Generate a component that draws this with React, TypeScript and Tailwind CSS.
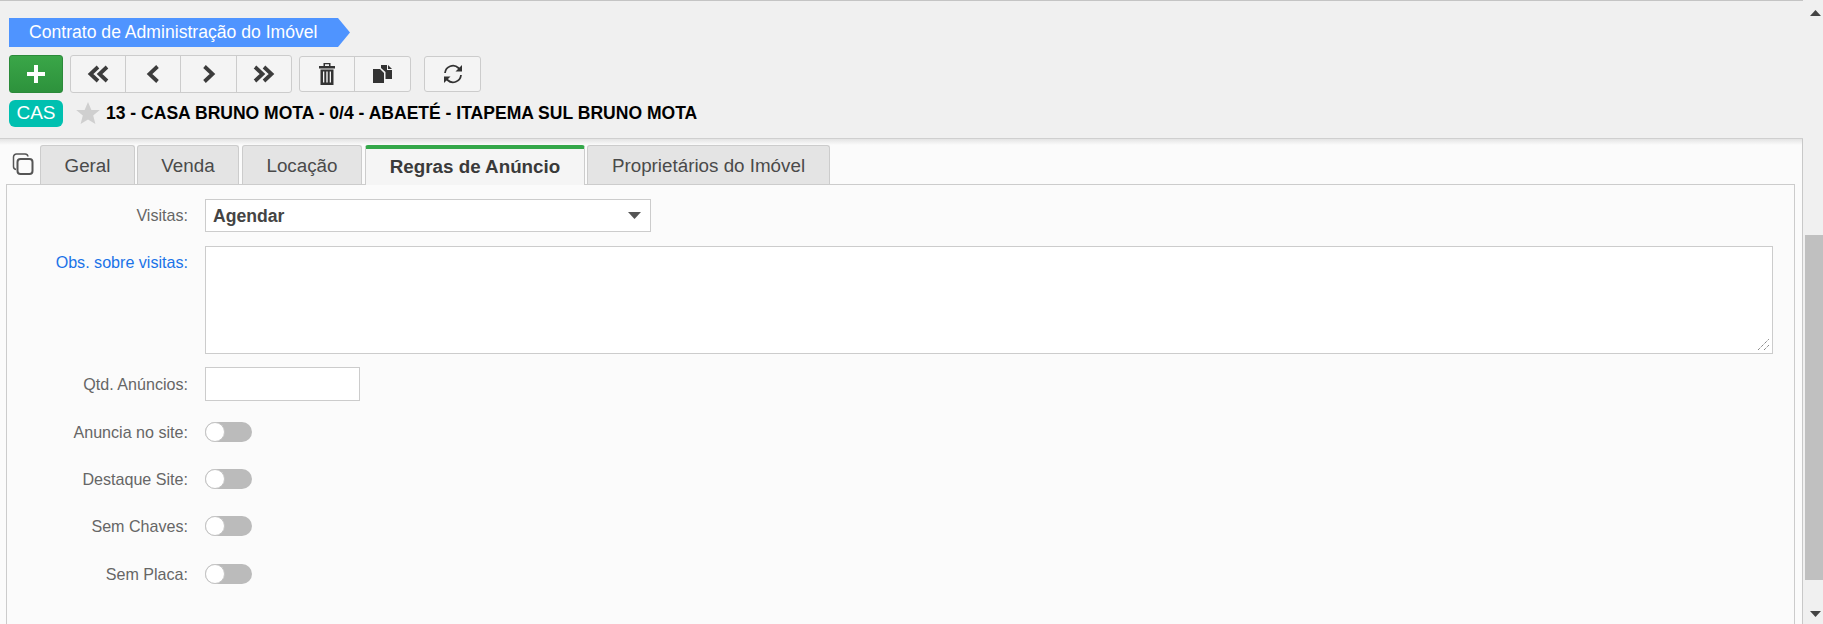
const Btn = ({ w, last, children }: { w: string; last?: boolean; children: React.ReactNode }) => (
  <div className={`${w} ${last ? "" : "border-r border-[#cccccc]"} flex items-center justify-center h-full`}>{children}</div>
);

const Chev = ({ dir, double }: { dir: "l" | "r"; double?: boolean }) => (
  <svg width="22" height="18" viewBox="0 0 22 18" fill="none" stroke="#3c3c3c" strokeWidth="3.8">
    {dir === "l" ? (
      double ? (
        <>
          <path d="M11 2 L3.500 9 L11 16" />
          <path d="M20 2 L12.500 9 L20 16" />
        </>
      ) : (
        <path d="M15.500 1.500 L7.500 9 L15.500 16.500" />
      )
    ) : double ? (
      <>
        <path d="M2 2 L9.500 9 L2 16" />
        <path d="M11 2 L18.500 9 L11 16" />
      </>
    ) : (
      <path d="M6.500 1.500 L14.500 9 L6.500 16.500" />
    )}
  </svg>
);

const Toggle = () => (
  <div className="w-[47px] h-[20px] rounded-full bg-[#bbbbbb] relative">
    <div className="absolute left-0 top-0 w-[20px] h-[20px] rounded-full bg-white border border-[#c4c4c4]" />
  </div>
);

const Row = ({ label, blue, pad, className, children }: { label: string; blue?: boolean; pad?: string; className?: string; children: React.ReactNode }) => (
  <div className={`flex items-start ${className ?? ""}`}>
    <div className={`w-[181px] text-right text-[16.1px] leading-[20px] ${pad ?? ""} ${blue ? "text-[#1a73e8]" : "text-[#666666]"}`}>{label}</div>
    <div className="ml-[17px]">{children}</div>
  </div>
);

const Tab = ({ w, label, active, ml }: { w: string; label: string; active?: boolean; ml?: string }) =>
  active ? (
    <div className={`${w} ${ml ?? ""} h-[40px] mb-[-1px] relative bg-[#f5f5f5] border-x border-[#cccccc] border-t-[4px] border-t-[#34a84a] rounded-t-[3px] flex items-center justify-center text-[18.8px] font-bold text-[#3a3a3a]`}>
      {label}
    </div>
  ) : (
    <div className={`${w} ${ml ?? ""} h-[39px] pt-[2px] bg-[#e4e4e4] border-x border-t border-[#cccccc] rounded-t-[3px] flex items-center justify-center text-[18.8px] text-[#4a4a4a]`}>
      {label}
    </div>
  );

export default function App() {
  return (
    <div className="w-[1823px] h-[624px] overflow-hidden flex bg-[#f0f0f0] font-['Liberation_Sans',Arial,sans-serif]">
      <div className="w-[1803px] flex flex-col">
        <div className="h-[139px] shrink-0 border-t border-[#c4c4c4] border-b border-b-[#cfcfcf] bg-[#f0f0f0] pl-[9px] pt-[17px]">
          <div
            className="w-[341px] h-[29px] bg-[#4f94ff] text-white text-[17.6px] leading-[29px] pl-[20px]"
            style={{ clipPath: "polygon(0 0, 329px 0, 100% 50%, 329px 100%, 0 100%)" }}
          >
            Contrato de Administração do Imóvel
          </div>
          <div className="flex items-center mt-[8px] h-[38px]">
            <div className="w-[54px] h-[38px] rounded-[3px] bg-gradient-to-b from-[#3aa648] to-[#2d923c] border border-[#2b8a3a] flex items-center justify-center">
              <svg width="20" height="20" viewBox="0 0 20 20"><path d="M8 1h4v7h7v4h-7v7H8v-7H1V8h7z" fill="#fff" /></svg>
            </div>
            <div className="ml-[7px] w-[222px] h-[38px] flex bg-[#f4f4f4] border border-[#cccccc] rounded-[3px]">
              <Btn w="w-[55px]"><Chev dir="l" double /></Btn>
              <Btn w="w-[55px]"><Chev dir="l" /></Btn>
              <Btn w="w-[56px]"><Chev dir="r" /></Btn>
              <Btn w="w-[54px]" last><Chev dir="r" double /></Btn>
            </div>
            <div className="ml-[7px] w-[112px] h-[36px] flex bg-[#f4f4f4] border border-[#cccccc] rounded-[3px]">
              <Btn w="w-[55px]">
                <svg width="16" height="22" viewBox="0 0 16 22" fill="#333">
                  <path fillRule="evenodd" d="M4.500 0h7v3H16v2.500H0V3h4.500zM6 1.200V3h4V1.200z" />
                  <path fillRule="evenodd" d="M1.500 6.500h13V22h-13zM4 8.500v11h1.300v-11zM7.300 8.500v11h1.400v-11zM10.700 8.500v11H12v-11z" />
                </svg>
              </Btn>
              <Btn w="w-[55px]" last>
                <svg width="20" height="18" viewBox="0 0 20 18" fill="#333">
                  <path d="M0 4h7l4 4v10H0z" />
                  <path d="M8 0h6v5h5v9h-6.500V7L8 3z" />
                  <path d="M15 0l4 4h-4z" />
                </svg>
              </Btn>
            </div>
            <div className="ml-[13px] w-[57px] h-[36px] bg-[#f4f4f4] border border-[#cccccc] rounded-[3px] flex items-center justify-center">
              <svg width="20" height="20" viewBox="0 0 20 20" fill="none" stroke="#333" strokeWidth="1.8">
                <path d="M2 9a8 8 0 0 1 13.500-5L17 5.500" />
                <path d="M18 11a8 8 0 0 1-13.500 5L3 14.500" />
                <path d="M19 1v6.500h-6.500z" fill="#333" stroke="none" />
                <path d="M1 19v-6.500h6.500z" fill="#333" stroke="none" />
              </svg>
            </div>
          </div>
          <div className="flex items-center mt-[7px] h-[27px]">
            <div className="w-[54px] h-[27px] rounded-[6px] bg-[#00c0b0] text-white text-[19px] flex items-center justify-center">CAS</div>
            <svg className="ml-[13px]" width="24" height="23" viewBox="0 0 24 23"><path d="M12 0l3.400 8h8.400l-6.600 5.600L19.400 22 12 17.400 4.600 22l2.200-8.400L.2 8h8.400z" fill="#cfcfcf" /></svg>
            <div className="ml-[6px] text-[17.55px] font-bold text-black">13 - CASA BRUNO MOTA - 0/4 - ABAETÉ - ITAPEMA SUL BRUNO MOTA</div>
          </div>
        </div>
        <div className="flex-1 bg-[#fbfbfb] border-r border-[#c8c8c8] pl-[6px] pr-[7px] flex flex-col min-h-0 relative">
          <div className="absolute left-0 right-0 top-0 h-[6px] bg-gradient-to-b from-[#e4e4e4] to-[#fbfbfb]" />
          <div className="flex items-end h-[45px] shrink-0 relative">
            <svg className="ml-[6px] mr-[6px] mb-[9px]" width="22" height="22" viewBox="0 0 22 22" fill="none" stroke="#555" strokeWidth="1.500">
              <rect x="5.500" y="6" width="15" height="15" rx="3" strokeWidth="2" />
              <path d="M4 16.500A3 3 0 0 1 1.500 13.500V4a3 3 0 0 1 3-3H13a3 3 0 0 1 3 2.500" />
            </svg>
            <div className="flex">
              <Tab w="w-[95px]" label="Geral" />
              <Tab w="w-[102px]" ml="ml-[2px]" label="Venda" />
              <Tab w="w-[120px]" ml="ml-[3px]" label="Locação" />
              <Tab w="w-[220px]" ml="ml-[3px]" label="Regras de Anúncio" active />
              <Tab w="w-[243px]" ml="ml-[2px]" label="Proprietários do Imóvel" />
            </div>
          </div>
          <div className="flex-1 border-x border-t border-[#cccccc] bg-[#fbfbfb] pt-[14px] pr-[19px] min-h-0">
            <Row label="Visitas:" pad="pt-[6px]" className="h-[34px]">
              <div className="w-[446px] h-[33px] bg-white border border-[#cccccc] flex items-center justify-between pl-[7px] pr-[9px] text-[17.6px] font-bold text-[#444444]">
                <span className="pt-[1px]">Agendar</span>
                <svg width="13" height="7" viewBox="0 0 13 7"><path d="M0 0h13L6.500 7z" fill="#555" /></svg>
              </div>
            </Row>
            <Row label="Obs. sobre visitas:" pad="pt-[6px]" blue className="mt-[13px]">
              <div className="w-[1568px] h-[108px] bg-white border border-[#cccccc] relative">
                <svg className="absolute right-[2px] bottom-[2px]" width="13" height="13" viewBox="0 0 13 13" stroke="#555" strokeWidth="1" strokeDasharray="1 1">
                  <path d="M1 12L12 1M7 12l5-5" />
                </svg>
              </div>
            </Row>
            <Row label="Qtd. Anúncios:" pad="pt-[7px]" className="mt-[13px]">
              <div className="w-[155px] h-[34px] bg-white border border-[#cccccc]" />
            </Row>
            {["Anuncia no site:", "Destaque Site:", "Sem Chaves:", "Sem Placa:"].map((l, i) => (
              <Row key={l} label={l} className={i === 0 ? "mt-[21px] h-[20px]" : i === 3 ? "mt-[28px] h-[20px]" : "mt-[27px] h-[20px]"}>
                <Toggle />
              </Row>
            ))}
          </div>
        </div>
      </div>
      <div className="w-[20px] flex flex-col items-end relative">
        <svg className="absolute left-[7px] top-[10px]" width="11" height="6" viewBox="0 0 11 6"><path d="M5.500 0L11 6H0z" fill="#444" /></svg>
        <div className="absolute left-[2px] right-0 top-[235px] h-[345px] bg-[#c0c0c0]" />
        <svg className="absolute left-[7px] top-[611px]" width="11" height="6" viewBox="0 0 11 6"><path d="M0 0h11L5.500 6z" fill="#444" /></svg>
      </div>
    </div>
  );
}
